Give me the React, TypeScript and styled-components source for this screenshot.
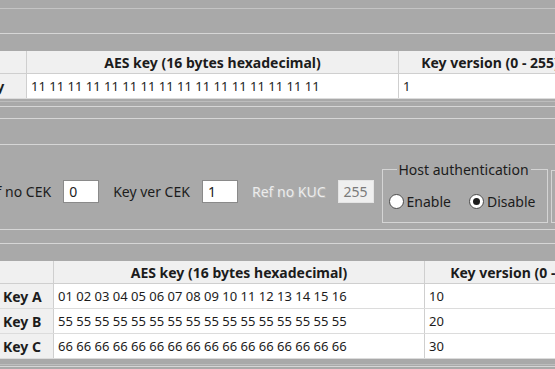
import React from 'react';
import styled, { createGlobalStyle } from 'styled-components';

const GlobalStyle = createGlobalStyle`
    html, body {
        margin: 0;
        padding: 0;
        background: #a9a9a9;
    }
    body {
        font-family: "Noto Sans", "Open Sans", sans-serif;
        font-size: 13px;
        color: #1c1c1c;
    }
`;

const Screen = styled.div`
    width: 555px;
    height: 369px;
    overflow: hidden;
    display: flex;
    flex-direction: column;
    background: #a9a9a9;
`;

const Rule = styled.div<{ $gap: number; $tone?: string }>`
    flex: none;
    height: 1px;
    margin-top: ${p => p.$gap}px;
    background: ${p => p.$tone || '#d6d6d6'};
`;

const Grid = styled.table<{ $gap: number; $shift: number; $width: number }>`
    flex: none;
    margin-top: ${p => p.$gap}px;
    margin-left: ${p => p.$shift}px;
    border-collapse: collapse;
    table-layout: fixed;
    width: ${p => p.$width}px;
    background: #ffffff;
`;

const HeadCell = styled.th<{ $w: number }>`
    width: ${p => p.$w}px;
    height: 22px;
    padding: 0;
    background: #f0f0f0;
    border-right: 1px solid #cfcfcf;
    border-bottom: 1px solid #cfcfcf;
    font-size: 14px;
    font-weight: 700;
    text-align: center;
    white-space: nowrap;
    overflow: hidden;
`;

const RowHead = styled.th`
    height: 24px;
    padding: 0 0 0 3px;
    background: #f0f0f0;
    border-right: 1px solid #cfcfcf;
    border-bottom: 1px solid #dcdcdc;
    font-size: 14px;
    font-weight: 700;
    text-align: left;
    white-space: nowrap;
`;

const Cell = styled.td`
    height: 24px;
    padding: 0 0 0 4px;
    border-right: 1px solid #cfcfcf;
    border-bottom: 1px solid #dcdcdc;
    white-space: nowrap;
    overflow: hidden;
`;

const Controls = styled.div`
    flex: none;
    height: 84px;
    margin-left: -20px;
    padding-top: 9px;
    box-sizing: border-box;
    display: flex;
    align-items: center;
`;

const Label = styled.span<{ $off?: boolean }>`
    flex: none;
    font-size: 14px;
    white-space: nowrap;
    color: ${p => (p.$off ? '#ececec' : '#1c1c1c')};
    text-shadow: ${p => (p.$off ? '1px 1px 0 #b8b8b8' : 'none')};
    margin-right: 12px;
`;

const Field = styled.div<{ $off?: boolean }>`
    flex: none;
    width: 36px;
    height: 23px;
    box-sizing: border-box;
    padding: 0 5px;
    display: flex;
    align-items: center;
    font-size: 14px;
    background: ${p => (p.$off ? '#efefef' : '#ffffff')};
    border: 1px solid ${p => (p.$off ? '#e4e4e4' : '#8a8a8a')};
    color: ${p => (p.$off ? '#7a7a7a' : '#1c1c1c')};
    margin-right: ${p => (p.$off ? 8 : 14)}px;
`;

const Group = styled.fieldset`
    flex: none;
    align-self: flex-start;
    margin: 6px 0 0 0;
    padding: 4px 6px 2px 6px;
    width: 166px;
    height: 63px;
    box-sizing: border-box;
    border: 1px solid #d4d4d4;
    display: flex;
    align-items: center;
    gap: 18px;

    legend {
        padding: 0 2px;
        margin-left: 8px;
        font-size: 14px;
        color: #1c1c1c;
    }
`;

const NextGroup = styled.div`
    flex: none;
    align-self: flex-start;
    width: 40px;
    height: 53px;
    margin: 16px 0 0 3px;
    border: 1px solid #d4d4d4;
    box-sizing: border-box;
`;

const Radio = styled.label`
    display: flex;
    align-items: center;
    gap: 3px;
    font-size: 14px;
    white-space: nowrap;
`;

const Dot = styled.span<{ $on?: boolean }>`
    width: 15px;
    height: 15px;
    box-sizing: border-box;
    border-radius: 50%;
    border: 1px solid #4a4a4a;
    background: #fff;
    display: flex;
    align-items: center;
    justify-content: center;

    &::after {
        content: '';
        width: 7px;
        height: 7px;
        border-radius: 50%;
        background: ${p => (p.$on ? '#1c1c1c' : 'transparent')};
    }
`;

const keyRows = [
    { name: 'Key A', aes: '01 02 03 04 05 06 07 08 09 10 11 12 13 14 15 16', ver: '10' },
    { name: 'Key B', aes: '55 55 55 55 55 55 55 55 55 55 55 55 55 55 55 55', ver: '20' },
    { name: 'Key C', aes: '66 66 66 66 66 66 66 66 66 66 66 66 66 66 66 66', ver: '30' }
];

const App = () => {
    return (
        <Screen>
            <GlobalStyle />
            <Rule $gap={8} $tone="#c4c4c4" />
            <Rule $gap={24} />

            <Grid $gap={17} $shift={-24} $width={603}>
                <thead>
                    <tr>
                        <HeadCell $w={50} />
                        <HeadCell $w={371}>AES key (16 bytes hexadecimal)</HeadCell>
                        <HeadCell $w={182}>Key version (0 - 255)</HeadCell>
                    </tr>
                </thead>
                <tbody>
                    <tr>
                        <RowHead>Key</RowHead>
                        <Cell>11 11 11 11 11 11 11 11 11 11 11 11 11 11 11 11</Cell>
                        <Cell>1</Cell>
                    </tr>
                </tbody>
            </Grid>

            <Rule $gap={2} $tone="#bdbdbd" />
            <Rule $gap={4} />
            <Rule $gap={11} />
            <Rule $gap={25} />

            <Controls>
                <Label>Ref no CEK</Label>
                <Field>0</Field>
                <Label>Key ver CEK</Label>
                <Field>1</Field>
                <Label $off>Ref no KUC</Label>
                <Field $off>255</Field>
                <Group>
                    <legend>Host authentication</legend>
                    <Radio><Dot />Enable</Radio>
                    <Radio><Dot $on />Disable</Radio>
                </Group>
                <NextGroup />
            </Controls>

            <Rule $gap={0} />
            <Rule $gap={13} />

            <Grid $gap={17} $shift={0} $width={611}>
                <thead>
                    <tr>
                        <HeadCell $w={53} />
                        <HeadCell $w={370}>AES key (16 bytes hexadecimal)</HeadCell>
                        <HeadCell $w={188}>Key version (0 - 255)</HeadCell>
                    </tr>
                </thead>
                <tbody>
                    {keyRows.map(row => (
                        <tr key={row.name}>
                            <RowHead>{row.name}</RowHead>
                            <Cell>{row.aes}</Cell>
                            <Cell>{row.ver}</Cell>
                        </tr>
                    ))}
                </tbody>
            </Grid>

            <Rule $gap={5} $tone="#bdbdbd" />
            <Rule $gap={1} />
        </Screen>
    );
};

export default App;
